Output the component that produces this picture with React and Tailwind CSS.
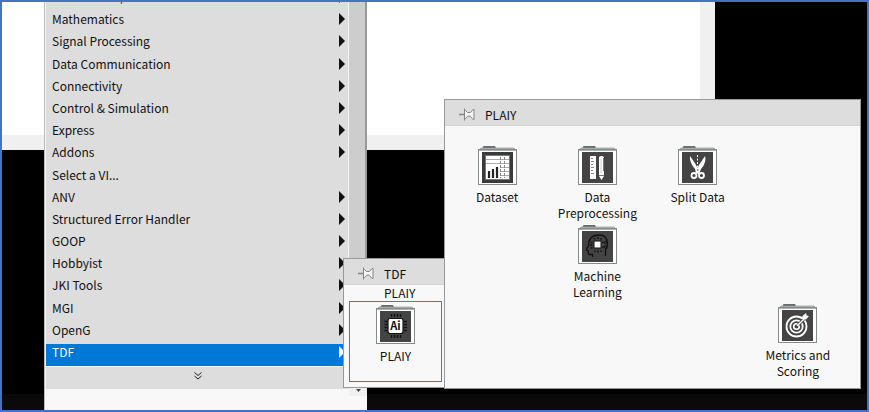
import React from 'react';

const categories = [
  { name: 'Instrument I/O', arrow: true },
  { name: 'Mathematics', arrow: true },
  { name: 'Signal Processing', arrow: true },
  { name: 'Data Communication', arrow: true },
  { name: 'Connectivity', arrow: true },
  { name: 'Control & Simulation', arrow: true },
  { name: 'Express', arrow: true },
  { name: 'Addons', arrow: true },
  { name: 'Select a VI...', arrow: false },
  { name: 'ANV', arrow: true },
  { name: 'Structured Error Handler', arrow: true },
  { name: 'GOOP', arrow: true },
  { name: 'Hobbyist', arrow: true },
  { name: 'JKI Tools', arrow: true },
  { name: 'MGI', arrow: true },
  { name: 'OpenG', arrow: true },
  { name: 'TDF', arrow: true, selected: true },
];

function Pin() {
  return (
    <svg width="16" height="16" viewBox="0 0 16 16" fill="none" stroke="#858585" aria-hidden="true">
      <path d="M0 7.5h5" strokeWidth="1.5" />
      <path d="M5.500 1.500v12M5.500 3.500h1l2 2h3l2.500-3h1v10h-1l-2.500-3h-3l-2 2h-1" fill="#f4f4f4" />
      <path d="M8.500 9h3" stroke="#b5b5b5" />
    </svg>
  );
}

function Folder({ children }) {
  return (
    <svg width="39" height="40" viewBox="0 0 39 40" aria-hidden="true">
      <path d="M4 3l1.500-3H17l1.500 3z" fill="#68706f" />
      <path d="M1 4l2-2h33l2 2z" fill="#b5bab9" stroke="#858b8a" strokeWidth=".6" />
      <rect x=".5" y="3.500" width="38" height="35" fill="#fff" stroke="#858b8a" />
      <path d="M1 4.500h37" stroke="#aeb3b2" />
      <rect x="4" y="6" width="31" height="31" fill="#444" />
      {children}
    </svg>
  );
}

function DatasetIcon() {
  return (
    <Folder>
      <rect x="4" y="6" width="31" height="31" fill="#3a3a3a" />
      <rect x="7.500" y="9.500" width="24" height="24" fill="#fff" stroke="#777" />
      <path d="M8 13.500h15M8 17.500h15M23 13.500h8M23 17.500h8M22 21.500h9M22 25.500h9M22 29.500h9" stroke="#aaa" />
      <path d="M22.500 11v21M26.500 11v21" stroke="#888" strokeDasharray="3 1" />
      <path d="M11 32v-7M15 32v-9M19 32V21" stroke="#222" strokeWidth="2.200" />
    </Folder>
  );
}

function RulerIcon() {
  return (
    <Folder>
      <rect x="12" y="10" width="6" height="23" fill="#fff" />
      <path d="M13 12.500h2M13 15.500h3M13 18.500h2M13 21.500h3M13 24.500h2M13 27.500h3" stroke="#888" />
      <path d="M21 11q2.500-2 5 0v19l-2.500 4-2.500-4z" fill="#fff" />
      <path d="M23 12.500v15" stroke="#ccc" />
      <path d="M25.500 12v13M21 29.500h5" stroke="#555" strokeWidth=".8" />
    </Folder>
  );
}

function ScissorsIcon() {
  return (
    <Folder>
      <path d="M12 10q-1 6 5 13l1 4 3 1 2-5q6-7 4-13l-6 9-1.500 3-2-4z" fill="#fff" />
      <g fill="none" stroke="#fff">
        <path d="M19.500 9v13" strokeDasharray="2 1.500" />
        <circle cx="16" cy="29.500" r="2.500" strokeWidth="1.800" />
        <circle cx="23.500" cy="29.500" r="2.500" strokeWidth="1.800" />
      </g>
      <circle cx="19.700" cy="24" r=".8" fill="#444" />
    </Folder>
  );
}

function BrainIcon() {
  return (
    <Folder>
      <g fill="none" stroke="#111">
        <path
          d="M14.500 32v-2.500h-3.500q-1-1-.5-3.500l-2-1q0-1.500 2-4 0-11 10.500-11 8.500 0 8.500 9 0 4-2 6v6"
          strokeWidth="1.300"
        />
        <path d="M16.500 14.500v-1.500M20 14v-2M23 14.500v-1.500M17 25.500v1.500M20 25.500v2M23 25.500v1.500M12.500 17.500h2M12 20h2.500M12.500 23h2" strokeWidth="1.500" />
        <path d="M24 17.500h2M24 22h2" />
        <circle cx="27.500" cy="17.500" r="1.200" />
        <circle cx="27.500" cy="22" r="1.200" />
      </g>
      <rect x="16" y="16" width="7" height="7" fill="#fff" stroke="#111" />
    </Folder>
  );
}

function TargetIcon() {
  return (
    <Folder>
      <g fill="none" stroke="#fff">
        <circle cx="18.500" cy="22.500" r="10" strokeWidth="1.800" />
        <circle cx="18.500" cy="22.500" r="6.200" strokeWidth="1.800" />
        <circle cx="18.500" cy="22.500" r="2.800" strokeWidth="1.600" />
        <path d="M20 21l7-7" stroke="#444" strokeWidth="3" />
        <path d="M19 22l8-8" strokeWidth="1.400" />
      </g>
      <path d="M24 15l.5-3 3.500-3 .7 2.500 2.300.5-3 3.500z" fill="#fff" />
    </Folder>
  );
}

function ChipIcon() {
  return (
    <Folder>
      <path
        d="M15.500 9v3M18.500 9v3M21.500 9v3M24.500 9v3M15.500 30v3M18.500 30v3M21.500 30v3M24.500 30v3M8.500 16.500h3M8.500 19.500h3M8.500 22.500h3M8.500 25.500h3M28 16.500h3M28 19.500h3M28 22.500h3M28 25.500h3"
        stroke="#111"
        strokeWidth="1.400"
      />
      <rect x="12" y="13.500" width="15" height="15" rx="2" fill="#fff" stroke="#111" strokeWidth="1.200" />
      <text x="19.500" y="25" textAnchor="middle" fontSize="11" fontWeight="700" fill="#111">
        Ai
      </text>
    </Folder>
  );
}

const palette = [
  { name: 'Dataset', Icon: DatasetIcon, cell: 'col-start-1 row-start-1' },
  { name: 'Data Preprocessing', Icon: RulerIcon, cell: 'col-start-2 row-start-1' },
  { name: 'Split Data', Icon: ScissorsIcon, cell: 'col-start-3 row-start-1' },
  { name: 'Machine Learning', Icon: BrainIcon, cell: 'col-start-2 row-start-2' },
  { name: 'Metrics and Scoring', Icon: TargetIcon, cell: 'col-start-4 row-start-3' },
];

function TitleBar({ title }) {
  return (
    <header className="flex h-[26px] items-center gap-2.5 border-b border-[#d4d4d4] bg-[#ddd] px-3.5 pt-1">
      <button aria-label="Pin palette">
        <Pin />
      </button>
      <h2>{title}</h2>
    </header>
  );
}

function CategoryMenu() {
  return (
    <nav className="absolute -top-[13px] bottom-0 left-[42px] flex w-[323px] flex-col border-l border-[#bbb] bg-[#f8f8f8]">
      <div className="flex flex-1">
        <ul className="flex flex-1 flex-col justify-between border-x border-[#f4f4f4] bg-[#ddd]">
          {categories.map((item) => (
            <li key={item.name}>
              <button
                className={
                  item.selected
                    ? 'flex h-[22px] w-full items-start justify-between bg-[#0078d7] pr-[3px] pl-1.5 text-white'
                    : 'flex h-[22px] w-full items-start justify-between pr-[3px] pl-1.5'
                }
              >
                <span>{item.name}</span>
                {item.arrow && (
                  <svg className="mt-0.5" width="6" height="12" viewBox="0 0 6 12" fill="currentColor" aria-hidden="true">
                    <path d="M0 0l6 6-6 6z" />
                  </svg>
                )}
              </button>
            </li>
          ))}
        </ul>
        <div className="w-[18px] border-r-2 border-[#999] bg-[#cdcdcd]" />
      </div>
      <div className="flex h-[44px] items-start">
        <button
          className="flex h-[23px] flex-1 items-center justify-center border-t border-l border-[#f4f4f4] bg-[#ddd] pb-1"
          aria-label="Show more"
        >
          <svg width="8" height="8" viewBox="0 0 8 8" fill="none" stroke="#222" aria-hidden="true">
            <path d="M.5.5L4 3.500 7.500.5M.5 4L4 7l3.500-3" />
          </svg>
        </button>
        <div className="flex h-[30px] w-[18px] items-end justify-center bg-[#f0f0f0] pb-1">
          <svg width="5" height="3" viewBox="0 0 5 3" fill="#444" aria-hidden="true">
            <path d="M0 0h5L2.500 3z" />
          </svg>
        </div>
      </div>
    </nav>
  );
}

function App() {
  return (
    <div className="relative h-screen overflow-hidden border-2 border-[#4472c4] bg-black font-['Noto_Sans_CJK_SC','Noto_Sans',sans-serif] text-[12px] leading-[16px] text-[#111]">
      <div className="absolute inset-x-0 bottom-0 h-4 bg-[#0a0a0a]" />
      <div className="absolute top-0 left-0 h-[148px] w-[713px] border-r-[15px] border-b-[15px] border-[#f0f0f0] bg-white" />

      <CategoryMenu />

      <section className="absolute top-[256px] left-[341px] w-[103px] border border-[#999] bg-[#f8f8f8]">
        <TitleBar title="TDF" />
        <p className="pl-10">PLAIY</p>
        <button className="mx-[5px] mb-[5px] flex h-[81px] w-[93px] flex-col items-center border border-[#2b87d3] pt-[3px]">
          <ChipIcon />
          <span className="mt-[3px]">PLAIY</span>
        </button>
      </section>

      <section className="absolute top-[97px] left-[442px] w-[417px] border border-[#999] bg-[#f8f8f8]">
        <TitleBar title="PLAIY" />
        <div className="grid grid-cols-4 grid-rows-3 pt-5 pr-3 pb-[5px] pl-0.5">
          {palette.map(({ name, Icon, cell }) => (
            <button key={name} className={`${cell} flex h-[79px] flex-col items-center`}>
              <Icon />
              <span className="mt-[3px] w-[84px]">{name}</span>
            </button>
          ))}
        </div>
      </section>
    </div>
  );
}

export default App;
